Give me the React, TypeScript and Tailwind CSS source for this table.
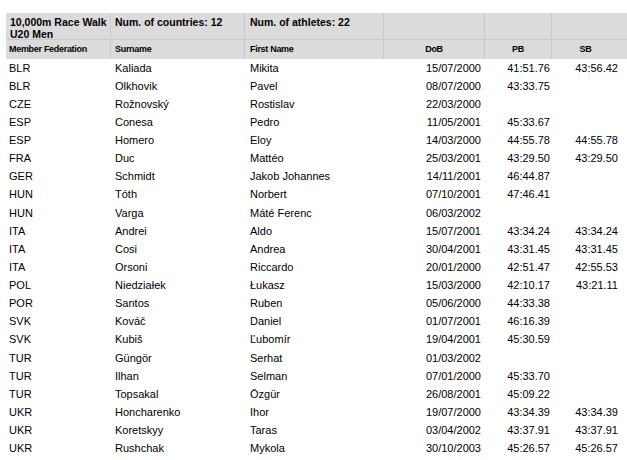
const rows: [string, string, string, string, string, string][] = [
  ['BLR', 'Kaliada', 'Mikita', '15/07/2000', '41:51.76', '43:56.42'],
  ['BLR', 'Olkhovik', 'Pavel', '08/07/2000', '43:33.75', ''],
  ['CZE', 'Rožnovský', 'Rostislav', '22/03/2000', '', ''],
  ['ESP', 'Conesa', 'Pedro', '11/05/2001', '45:33.67', ''],
  ['ESP', 'Homero', 'Eloy', '14/03/2000', '44:55.78', '44:55.78'],
  ['FRA', 'Duc', 'Mattéo', '25/03/2001', '43:29.50', '43:29.50'],
  ['GER', 'Schmidt', 'Jakob Johannes', '14/11/2001', '46:44.87', ''],
  ['HUN', 'Tóth', 'Norbert', '07/10/2001', '47:46.41', ''],
  ['HUN', 'Varga', 'Máté Ferenc', '06/03/2002', '', ''],
  ['ITA', 'Andrei', 'Aldo', '15/07/2001', '43:34.24', '43:34.24'],
  ['ITA', 'Cosi', 'Andrea', '30/04/2001', '43:31.45', '43:31.45'],
  ['ITA', 'Orsoni', 'Riccardo', '20/01/2000', '42:51.47', '42:55.53'],
  ['POL', 'Niedziałek', 'Łukasz', '15/03/2000', '42:10.17', '43:21.11'],
  ['POR', 'Santos', 'Ruben', '05/06/2000', '44:33.38', ''],
  ['SVK', 'Kováč', 'Daniel', '01/07/2001', '46:16.39', ''],
  ['SVK', 'Kubiš', 'Ľubomír', '19/04/2001', '45:30.59', ''],
  ['TUR', 'Güngör', 'Serhat', '01/03/2002', '', ''],
  ['TUR', 'Ilhan', 'Selman', '07/01/2000', '45:33.70', ''],
  ['TUR', 'Topsakal', 'Özgür', '26/08/2001', '45:09.22', ''],
  ['UKR', 'Honcharenko', 'Ihor', '19/07/2000', '43:34.39', '43:34.39'],
  ['UKR', 'Koretskyy', 'Taras', '03/04/2002', '43:37.91', '43:37.91'],
  ['UKR', 'Rushchak', 'Mykola', '30/10/2003', '45:26.57', '45:26.57'],
];

const cols = 'grid grid-cols-[105px_134px_139px_101px_67px_67px]';

export default function App() {
  return (
    <div className="w-[627px] h-[460px] bg-white pl-[6px] pt-[13px] text-black font-['Liberation_Sans',Arial,sans-serif]">
      {/* title row */}
      <div className={`${cols} h-[27px] bg-[#dbdbdb] border-b border-[#c9c9c9] text-[10.5px] font-bold leading-[12px]`}>
        <div className="pl-[4px] pt-[3px] border-r border-[#c9c9c9]">
          10,000m Race Walk
          <br />
          U20 Men
        </div>
        <div className="pl-[4px] pt-[3px] border-r border-[#c9c9c9]">Num. of countries: 12</div>
        <div className="pl-[5px] pt-[3px] border-r border-[#c9c9c9]">Num. of athletes: 22</div>
        <div className="border-r border-[#c9c9c9]" />
        <div className="border-r border-[#c9c9c9]" />
        <div />
      </div>

      {/* column labels */}
      <div className={`${cols} h-[19px] bg-[#dbdbdb] items-center text-[9px] font-bold tracking-[-0.3px]`}>
        <div className="pl-[3px] h-full flex items-center border-r border-[#c9c9c9]">Member Federation</div>
        <div className="pl-[4px] h-full flex items-center border-r border-[#c9c9c9]">Surname</div>
        <div className="pl-[5px] h-full flex items-center border-r border-[#c9c9c9]">First Name</div>
        <div className="h-full flex items-center justify-center border-r border-[#c9c9c9]">DoB</div>
        <div className="h-full flex items-center justify-center border-r border-[#c9c9c9]">PB</div>
        <div className="h-full flex items-center justify-center">SB</div>
      </div>

      {rows.map((r, i) => (
        <div key={i} className={`${cols} h-[18.13px] items-center text-[11px] leading-none`}>
          <div className="pl-[3px]">{r[0]}</div>
          <div className="pl-[4px]">{r[1]}</div>
          <div className="pl-[5px]">{r[2]}</div>
          <div className="text-right pr-[4px]">{r[3]}</div>
          <div className="text-right pr-[2px]">{r[4]}</div>
          <div className="text-right pr-[1px]">{r[5]}</div>
        </div>
      ))}
    </div>
  );
}
